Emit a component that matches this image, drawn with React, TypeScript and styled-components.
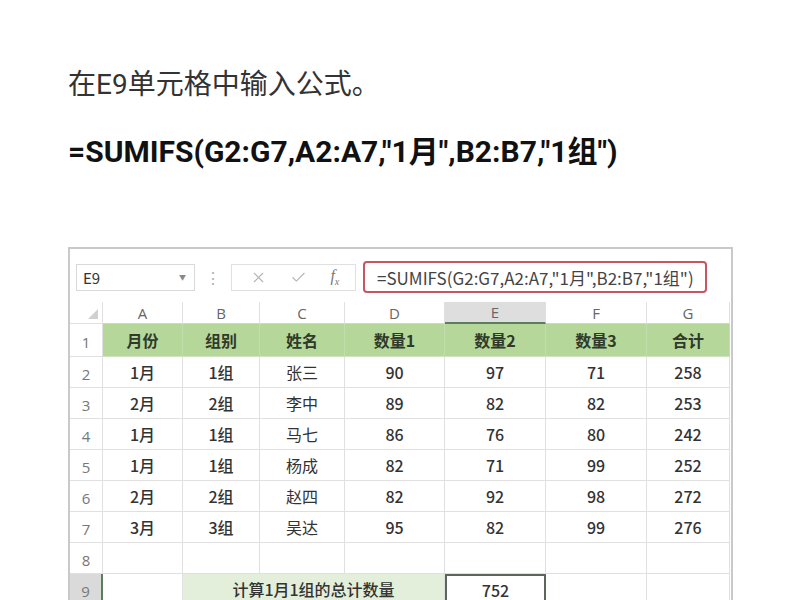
import React from 'react';
import styled, { createGlobalStyle, css } from 'styled-components';
import { X, Check } from 'lucide-react';

const GlobalStyle = createGlobalStyle`
    html, body {
        margin: 0;
        padding: 0;
        background: #fff;
        overflow: hidden;
    }
    body {
        font-family: Roboto, "Noto Sans CJK SC", sans-serif;
    }
`;

const Page = styled.div`
    height: 600px;
    box-sizing: border-box;
    padding: 66px 0 0 68px;
    overflow: hidden;
`;

const Intro = styled.p`
    margin: 0;
    font-size: 28px;
    line-height: 38px;
    color: #333;
`;

const FormulaLine = styled.p`
    margin: 29px 0 0;
    font-size: 30px;
    line-height: 38px;
    font-weight: 700;
    color: #111;
`;

const Shot = styled.div`
    margin-top: 76px;
    width: 665px;
    height: 360px;
    box-sizing: border-box;
    border: 2px solid #c9c9c9;
    border-bottom: none;
    background: #fff;
    font-family: "Noto Sans CJK SC", sans-serif;
`;

const Bar = styled.div`
    display: flex;
    align-items: center;
    height: 32px;
    margin-top: 12px;
    padding-left: 6px;
`;

const NameBox = styled.div`
    width: 119px;
    height: 27px;
    box-sizing: border-box;
    border: 1px solid #d9d9d9;
    display: flex;
    align-items: center;
    justify-content: space-between;
    padding: 0 8px 0 6px;
    font-size: 15px;
    color: #333;
`;

const Caret = styled.span`
    font-size: 7px;
    color: #888;
`;

const Dots = styled.span`
    width: 36px;
    text-align: center;
    color: #b0b0b0;
    font-size: 16px;
`;

const IconBox = styled.div`
    width: 125px;
    height: 27px;
    box-sizing: border-box;
    border: 1px solid #e0e0e0;
    display: flex;
    align-items: center;
    justify-content: space-around;
    padding: 0 4px 0 6px;
    color: #b4b4b4;
`;

const Fx = styled.span`
    font-family: "Liberation Serif", serif;
    font-style: italic;
    font-size: 16px;
    color: #777;

    sub {
        font-size: 10px;
    }
`;

const FormulaBox = styled.div`
    margin-left: 7px;
    width: 344px;
    height: 32px;
    box-sizing: border-box;
    border: 2px solid #c85560;
    border-radius: 4px;
    display: flex;
    align-items: center;
    padding-left: 12px;
    font-size: 17px;
    color: #444;
`;

const Sheet = styled.div`
    margin-top: 9px;
    display: grid;
    grid-template-columns: 33px 80px 77px 85px 100px 101px 101px 83px;
    grid-template-rows: 22px 33px repeat(8, 31px);
`;

const cellBase = css`
    box-sizing: border-box;
    display: flex;
    align-items: center;
    justify-content: center;
    border-right: 1px solid #e0e0e0;
    border-bottom: 1px solid #e0e0e0;
    font-size: 16px;
    color: #333;
`;

const Corner = styled.div`
    ${cellBase};
    justify-content: flex-end;
    align-items: flex-end;
    padding: 0 4px 4px 0;
`;

const ColHead = styled.div<{ $active?: boolean }>`
    ${cellBase};
    color: #666;
    font-size: 15px;
    font-family: "Open Sans", sans-serif;
    border-bottom-color: #d4d4d4;
    ${p => p.$active && css`
        background: #dedede;
        border-bottom: 2px solid #5e7d60;
    `}
`;

const RowHead = styled.div<{ $active?: boolean }>`
    ${cellBase};
    color: #777;
    font-size: 15px;
    font-family: "Open Sans", sans-serif;
    padding-top: 4px;
    ${p => p.$active && css`
        background: #dadada;
        border-right: 2px solid #5e7d60;
    `}
`;

const HeadCell = styled.div`
    ${cellBase};
    background: #b5d79a;
    border-right-color: #c3deae;
    border-bottom-color: #cfe3c0;
    font-weight: 700;
    color: #2f3a2a;
`;

const DataCell = styled.div<{ $num?: boolean }>`
    ${cellBase};
    font-weight: ${p => (p.$num ? 500 : 400)};
`;

const Merged = styled.div`
    ${cellBase};
    grid-column: span 3;
    background: #e3efda;
    font-weight: 500;
`;

const Selected = styled.div`
    ${cellBase};
    border: 2px solid #5d665d;
    font-weight: 500;
`;

const columns = ['A', 'B', 'C', 'D', 'E', 'F', 'G'];
const headers = ['月份', '组别', '姓名', '数量1', '数量2', '数量3', '合计'];
const rows = [
    ['1月', '1组', '张三', '90', '97', '71', '258'],
    ['2月', '2组', '李中', '89', '82', '82', '253'],
    ['1月', '1组', '马七', '86', '76', '80', '242'],
    ['1月', '1组', '杨成', '82', '71', '99', '252'],
    ['2月', '2组', '赵四', '82', '92', '98', '272'],
    ['3月', '3组', '吴达', '95', '82', '99', '276'],
];

export default function App() {
    return (
        <Page>
            <GlobalStyle />
            <Intro>在E9单元格中输入公式。</Intro>
            <FormulaLine>=SUMIFS(G2:G7,A2:A7,"1月",B2:B7,"1组")</FormulaLine>
            <Shot>
                <Bar>
                    <NameBox>
                        E9
                        <Caret>▼</Caret>
                    </NameBox>
                    <Dots>⋮</Dots>
                    <IconBox>
                        <X size={17} strokeWidth={1.5} />
                        <Check size={17} strokeWidth={1.5} />
                        <Fx>
                            f<sub>x</sub>
                        </Fx>
                    </IconBox>
                    <FormulaBox>=SUMIFS(G2:G7,A2:A7,"1月",B2:B7,"1组")</FormulaBox>
                </Bar>
                <Sheet>
                    <Corner>
                        <svg width='10' height='10' viewBox='0 0 10 10'>
                            <polygon points='10,0 10,10 0,10' fill='#d0d0d0' />
                        </svg>
                    </Corner>
                    {columns.map(c => (
                        <ColHead key={c} $active={c === 'E'}>
                            {c}
                        </ColHead>
                    ))}

                    <RowHead>1</RowHead>
                    {headers.map(h => (
                        <HeadCell key={h}>{h}</HeadCell>
                    ))}

                    {rows.map((row, i) => (
                        <React.Fragment key={i}>
                            <RowHead>{i + 2}</RowHead>
                            {row.map((v, j) => (
                                <DataCell key={j} $num={j !== 2}>
                                    {v}
                                </DataCell>
                            ))}
                        </React.Fragment>
                    ))}

                    <RowHead>8</RowHead>
                    {columns.map(c => (
                        <DataCell key={`8${c}`} />
                    ))}

                    <RowHead $active>9</RowHead>
                    <DataCell />
                    <Merged>计算1月1组的总计数量</Merged>
                    <Selected>752</Selected>
                    <DataCell />
                    <DataCell />
                </Sheet>
            </Shot>
        </Page>
    );
}
